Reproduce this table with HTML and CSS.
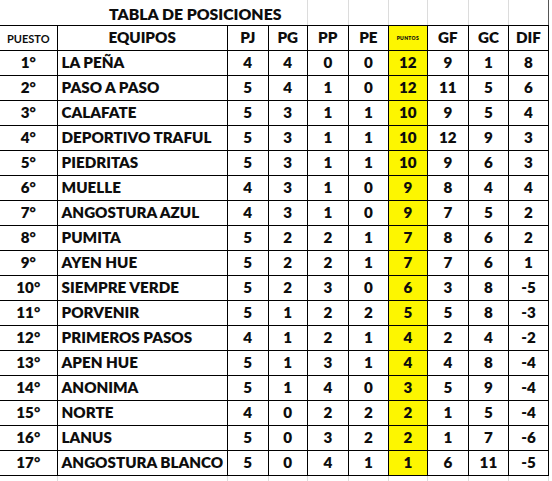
FILE: index.html
```html
<!DOCTYPE html>
<html lang="es">
<head>
<meta charset="utf-8">
<title>Tabla de posiciones</title>
<link rel="stylesheet" href="styles.css">
</head>
<body>
<table class="standings">
  <colgroup>
    <col class="c-pos"><col class="c-team"><col class="c-n1"><col class="c-n2"><col class="c-n1"><col class="c-n3"><col class="c-n2"><col class="c-n1"><col class="c-n3"><col class="c-n3">
  </colgroup>
  <thead>
    <tr class="title-row">
      <th class="title" colspan="4">TABLA DE POSICIONES</th>
      <th class="ghost"></th><th class="ghost"></th><th class="ghost"></th><th class="ghost"></th><th class="ghost"></th><th class="ghost last"></th>
    </tr>
    <tr class="head-row">
      <th class="h-pos">PUESTO</th>
      <th class="h-team">EQUIPOS</th>
      <th>PJ</th><th>PG</th><th>PP</th><th>PE</th>
      <th class="pts h-pts">PUNTOS</th>
      <th>GF</th><th>GC</th><th>DIF</th>
    </tr>
  </thead>
  <tbody>
    <tr><td>1°</td><td class="team">LA PEÑA</td><td>4</td><td>4</td><td>0</td><td>0</td><td class="pts">12</td><td>9</td><td>1</td><td>8</td></tr>
    <tr><td>2°</td><td class="team">PASO A PASO</td><td>5</td><td>4</td><td>1</td><td>0</td><td class="pts">12</td><td>11</td><td>5</td><td>6</td></tr>
    <tr><td>3°</td><td class="team">CALAFATE</td><td>5</td><td>3</td><td>1</td><td>1</td><td class="pts">10</td><td>9</td><td>5</td><td>4</td></tr>
    <tr><td>4°</td><td class="team">DEPORTIVO TRAFUL</td><td>5</td><td>3</td><td>1</td><td>1</td><td class="pts">10</td><td>12</td><td>9</td><td>3</td></tr>
    <tr><td>5°</td><td class="team">PIEDRITAS</td><td>5</td><td>3</td><td>1</td><td>1</td><td class="pts">10</td><td>9</td><td>6</td><td>3</td></tr>
    <tr><td>6°</td><td class="team">MUELLE</td><td>4</td><td>3</td><td>1</td><td>0</td><td class="pts">9</td><td>8</td><td>4</td><td>4</td></tr>
    <tr><td>7°</td><td class="team">ANGOSTURA AZUL</td><td>4</td><td>3</td><td>1</td><td>0</td><td class="pts">9</td><td>7</td><td>5</td><td>2</td></tr>
    <tr><td>8°</td><td class="team">PUMITA</td><td>5</td><td>2</td><td>2</td><td>1</td><td class="pts">7</td><td>8</td><td>6</td><td>2</td></tr>
    <tr><td>9°</td><td class="team">AYEN HUE</td><td>5</td><td>2</td><td>2</td><td>1</td><td class="pts">7</td><td>7</td><td>6</td><td>1</td></tr>
    <tr><td>10°</td><td class="team">SIEMPRE VERDE</td><td>5</td><td>2</td><td>3</td><td>0</td><td class="pts">6</td><td>3</td><td>8</td><td>-5</td></tr>
    <tr><td>11°</td><td class="team">PORVENIR</td><td>5</td><td>1</td><td>2</td><td>2</td><td class="pts">5</td><td>5</td><td>8</td><td>-3</td></tr>
    <tr><td>12°</td><td class="team">PRIMEROS PASOS</td><td>4</td><td>1</td><td>2</td><td>1</td><td class="pts">4</td><td>2</td><td>4</td><td>-2</td></tr>
    <tr><td>13°</td><td class="team">APEN HUE</td><td>5</td><td>1</td><td>3</td><td>1</td><td class="pts">4</td><td>4</td><td>8</td><td>-4</td></tr>
    <tr><td>14°</td><td class="team">ANONIMA</td><td>5</td><td>1</td><td>4</td><td>0</td><td class="pts">3</td><td>5</td><td>9</td><td>-4</td></tr>
    <tr><td>15°</td><td class="team">NORTE</td><td>4</td><td>0</td><td>2</td><td>2</td><td class="pts">2</td><td>1</td><td>5</td><td>-4</td></tr>
    <tr><td>16°</td><td class="team">LANUS</td><td>5</td><td>0</td><td>3</td><td>2</td><td class="pts">2</td><td>1</td><td>7</td><td>-6</td></tr>
    <tr><td>17°</td><td class="team">ANGOSTURA BLANCO</td><td>5</td><td>0</td><td>4</td><td>1</td><td class="pts">1</td><td>6</td><td>11</td><td>-5</td></tr>
  </tbody>
  <tfoot>
    <tr class="ghost-row"><td></td><td></td><td></td><td></td><td></td><td></td><td></td><td></td><td></td><td></td></tr>
  </tfoot>
</table>
</body>
</html>
```

FILE: styles.css
```css
html, body {
  margin: 0;
  padding: 0;
  background: #ffffff;
}

body {
  font-family: Lato, "Open Sans", "Liberation Sans", sans-serif;
  color: #0d0d0d;
  overflow: hidden;
}

.standings {
  border-collapse: collapse;
  table-layout: fixed;
  width: 549px;
}

.c-pos { width: 57px; }
.c-team { width: 170px; }
.c-n1 { width: 41px; }
.c-n2 { width: 39px; }
.c-n3 { width: 40px; }

.standings th,
.standings td {
  padding: 0;
  height: 24px;
  border: 1px solid #000;
  text-align: center;
  vertical-align: middle;
  font-weight: 800;
  font-size: 15.2px;
  line-height: 1;
  white-space: nowrap;
  overflow: hidden;
}

.standings tr > :first-child {
  border-left: none;
}

.title-row th {
  height: 23px;
  border-top: none;
  border-left: 1px solid #dcdcdc;
  border-right: 1px solid #dcdcdc;
}

.title-row .title {
  text-align: left;
  padding-left: 109px;
  padding-top: 2px;
  font-size: 15.8px;
  border-left: none;
  border-right: none;
}

.title-row .last {
  border-right: 1px solid #555;
}

.head-row th {
  font-size: 15.2px;
}

.head-row .h-pos {
  font-size: 11px;
  font-weight: 700;
}

.head-row .h-pts {
  font-size: 5px;
  letter-spacing: 0.3px;
}

.standings td.team {
  text-align: left;
  padding-left: 4px;
}

.pts {
  background: #fdf600;
}

.ghost-row td {
  height: 10px;
  border-top: none;
  border-bottom: none;
  border-left: 1px solid #dcdcdc;
  border-right: 1px solid #dcdcdc;
}
```
